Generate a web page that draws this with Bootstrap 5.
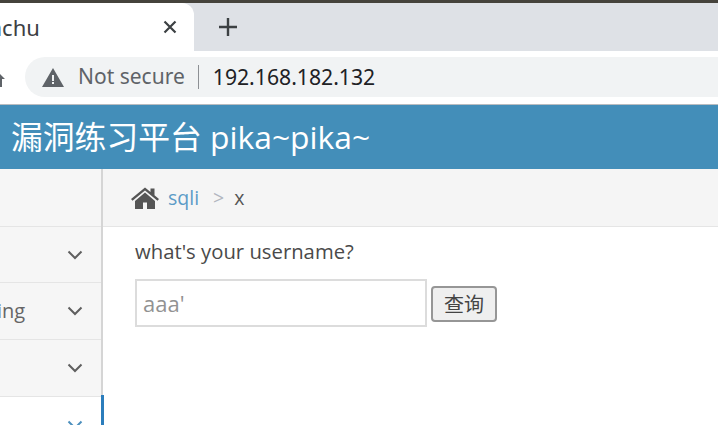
<!DOCTYPE html>
<html lang="zh-CN">
<head>
  <meta charset="UTF-8" />
  <meta name="viewport" content="width=device-width, initial-scale=1.0"/>
  <title>Pikachu</title>
  <link href="https://cdn.jsdelivr.net/npm/bootstrap@5.3.0/dist/css/bootstrap.min.css" rel="stylesheet"/>
  <style>
    html, body { height: 425px; overflow: hidden; }
    body { background: #fff; color: #393939; font-family: "Open Sans", "Noto Sans CJK SC", sans-serif; }
    .top-strip { height: 3px; background: #45433c; }
    .tab-strip { height: 48px; background: #dee1e6; }
    .tab-active { width: 194px; height: 48px; background: #fff; border-radius: 0 12px 0 0; padding-right: 17px; overflow: hidden; }
    .tab-name { margin-left: -41px; font-size: 22px; color: #3c4043; font-family: "Noto Sans", sans-serif; white-space: nowrap; }
    .tab-plus { margin-left: 24px; }
    .addr-row { height: 53px; padding-top: 6px; }
    .back-stub { width: 25px; flex: none; overflow: hidden; }
    .addr-pill { height: 40px; background: #f1f3f4; border-radius: 20px 0 0 20px; padding-left: 17px; font-family: "Noto Sans", sans-serif; }
    .not-secure { font-size: 21px; color: #5f6368; margin-left: 14px; }
    .addr-sep { width: 1px; height: 24px; background: #8d9094; margin: 0 14px 0 13px; }
    .addr-url { font-size: 21.2px; color: #202124; }
    .site-bar { height: 65px; background: #438eb9; border-top: 1px solid #b9bcc0; color: #fff; padding-left: 11px; font-size: 31.8px; }
    .main-wrap { height: 256px; }
    .side-col { width: 103px; flex: none; background: #f6f6f6; border-right: 2px solid #d5d5d5; }
    .side-head { height: 58px; border-bottom: 1px solid #e5e5e5; }
    .side-item { height: 57px; border-bottom: 1px solid #e5e5e5; padding-right: 18px; color: #666; font-size: 20px; }
    .side-item.short-row { height: 56px; }
    .side-item.is-open { background: #fff; border-bottom: 0; position: relative; height: 28px; padding-top: 23px; align-items: flex-start !important; }
    .side-item.is-open::after { content: ""; position: absolute; top: -2px; bottom: 0; right: -3px; width: 3px; background: #2b7dbc; }
    .item-cut { margin-left: -3px; white-space: nowrap; }
    .crumb-bar { height: 58px; background: #f5f5f5; border-bottom: 1px solid #e5e5e5; padding-left: 28px; font-size: 19.5px; }
    .crumb-link { color: #5b9bc7; margin-left: 9px; }
    .crumb-gt { color: #b2b6bf; margin: 0 10px 0 14px; }
    .crumb-now { color: #555; }
    .page-body { padding: 11px 0 0 32px; }
    .ask-line { font-size: 20.3px; line-height: 26px; color: #4a4a4a; margin-bottom: 15px; }
    .name-input { width: 292px; height: 48px; border: 2px solid #dcdcdc; padding: 0 6px; font-size: 22px; color: #929292; font-family: inherit; }
    .name-input::placeholder { color: #929292; opacity: 1; }
    .ask-btn { width: 66px; height: 36px; margin: 7px 0 0 4px; padding: 0; background: #efefef; border: 2px solid #969696; border-radius: 4px; font-size: 20px; line-height: 1; color: #444; font-family: "Noto Sans CJK SC", sans-serif; }
  </style>
</head>
<body>
  <div class="top-strip"></div>
  <div class="tab-strip d-flex align-items-center">
    <div class="tab-active d-flex align-items-center justify-content-between">
      <span class="tab-name">Pikachu</span>
      <svg width="14" height="14" viewBox="0 0 14 14"><path d="M1.500 1.500l11 11M12.500 1.500l-11 11" stroke="#3c4043" stroke-width="2.200"/></svg>
    </div>
    <svg class="tab-plus" width="20" height="20" viewBox="0 0 20 20"><path d="M10 1v18M1 10h18" stroke="#3c4043" stroke-width="2.400"/></svg>
  </div>
  <div class="addr-row d-flex">
    <div class="back-stub d-flex align-items-center">
      <svg width="5" height="16" viewBox="0 0 5 16"><path d="M0 1l5 5h-3v8H0z" fill="#5f6368"/></svg>
    </div>
    <div class="addr-pill flex-grow-1 d-flex align-items-center">
      <svg width="22" height="19" viewBox="0 0 22 19"><path fill-rule="evenodd" d="M11 0L22 19H0zM10 7v6h2V7zM10 14v2h2v-2z" fill="#5f6368"/></svg>
      <span class="not-secure">Not secure</span>
      <span class="addr-sep"></span>
      <span class="addr-url">192.168.182.132</span>
    </div>
  </div>
  <div class="site-bar d-flex align-items-center">漏洞练习平台 pika~pika~</div>
  <div class="main-wrap d-flex">
    <div class="side-col">
      <div class="side-head"></div>
      <div class="side-item short-row d-flex align-items-center justify-content-end">
        <svg width="16" height="10" viewBox="0 0 16 10"><path d="M1.500 1.500L8 8l6.500-6.500" fill="none" stroke="#5f5f5f" stroke-width="2"/></svg>
      </div>
      <div class="side-item d-flex align-items-center justify-content-between">
        <span class="item-cut">ing</span>
        <svg width="16" height="10" viewBox="0 0 16 10"><path d="M1.500 1.500L8 8l6.500-6.500" fill="none" stroke="#5f5f5f" stroke-width="2"/></svg>
      </div>
      <div class="side-item d-flex align-items-center justify-content-end">
        <svg width="16" height="10" viewBox="0 0 16 10"><path d="M1.500 1.500L8 8l6.500-6.500" fill="none" stroke="#5f5f5f" stroke-width="2"/></svg>
      </div>
      <div class="side-item is-open d-flex justify-content-end">
        <svg width="16" height="10" viewBox="0 0 16 10"><path d="M1.500 1.500L8 8l6.500-6.500" fill="none" stroke="#4c8fbd" stroke-width="2"/></svg>
      </div>
    </div>
    <div class="flex-grow-1">
      <div class="crumb-bar d-flex align-items-center">
        <svg width="28" height="22" viewBox="0 0 28 22"><path d="M14 0.500L0 12l1.500 1.800L14 3.500l12.500 10.300L28 12l-4.500-3.700V1.500h-4v3.500zM4 14V22h8v-6.500h4V22h8v-8L14 5.500z" fill="#555"/></svg>
        <span class="crumb-link">sqli</span>
        <span class="crumb-gt">&gt;</span>
        <span class="crumb-now">x</span>
      </div>
      <div class="page-body">
        <p class="ask-line">what's your username?</p>
        <form class="d-flex align-items-start">
          <input class="name-input" type="text" value="aaa'"/>
          <button class="ask-btn" type="button">查询</button>
        </form>
      </div>
    </div>
  </div>
  <script src="https://cdn.jsdelivr.net/npm/bootstrap@5.3.0/dist/js/bootstrap.bundle.min.js"></script>
</body>
</html>
